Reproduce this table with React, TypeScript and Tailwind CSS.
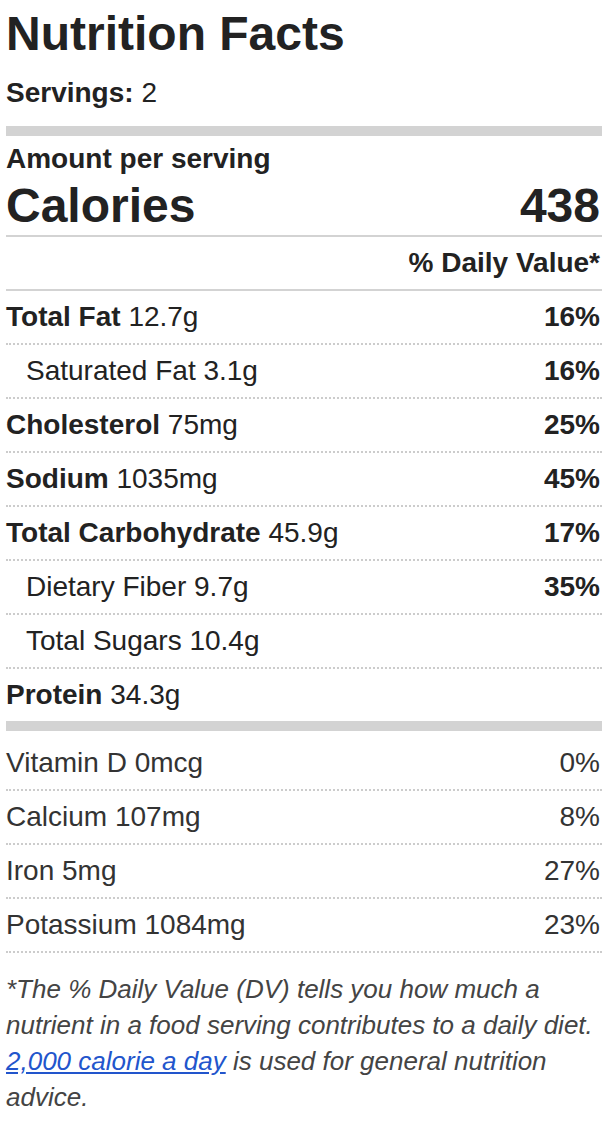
import React from "react";

type Row = {
  label: string;
  amount: string;
  dv?: string;
  indent?: boolean;
  last?: boolean;
};

const mainRows: Row[] = [
  { label: "Total Fat", amount: "12.7g", dv: "16%" },
  { label: "Saturated Fat", amount: "3.1g", dv: "16%", indent: true },
  { label: "Cholesterol", amount: "75mg", dv: "25%" },
  { label: "Sodium", amount: "1035mg", dv: "45%" },
  { label: "Total Carbohydrate", amount: "45.9g", dv: "17%" },
  { label: "Dietary Fiber", amount: "9.7g", dv: "35%", indent: true },
  { label: "Total Sugars", amount: "10.4g", indent: true },
  { label: "Protein", amount: "34.3g", last: true },
];

const vitamins = [
  { label: "Vitamin D 0mcg", dv: "0%" },
  { label: "Calcium 107mg", dv: "8%" },
  { label: "Iron 5mg", dv: "27%" },
  { label: "Potassium 1084mg", dv: "23%" },
];

const NutrientRow = ({ row }: { row: Row }) => {
  return (
    <div
      className={`flex h-[52px] items-center justify-between box-content ${
        row.last ? "" : "border-b-2 border-dotted border-[#cccccc]"
      } ${row.indent ? "pl-[20px]" : ""}`}
    >
      <span>
        {row.indent ? (
          <span>
            {row.label} {row.amount}
          </span>
        ) : (
          <>
            <span className="font-bold">{row.label}</span> {row.amount}
          </>
        )}
      </span>
      {row.dv && <span className="font-bold pr-[2px]">{row.dv}</span>}
    </div>
  );
};

export default function App() {
  return (
    <div
      className="min-h-screen bg-white text-[#222222]"
      style={{ fontFamily: '"Liberation Sans", Arial, sans-serif' }}
    >
      <div className="ml-[6px] w-[596px] text-[28px] leading-[36px]">
        {/* header */}
        <div className="flex h-[68px] items-center text-[48px] font-bold leading-none">
          Nutrition Facts
        </div>
        <div className="flex h-[50px] items-center">
          <span className="font-bold">Servings:</span>&nbsp;2
        </div>
        <div className="mt-[8px] h-[10px] bg-[#d3d3d3]" />

        {/* calories */}
        <div className="flex h-[37px] mt-[4px] items-center font-bold">
          Amount per serving
        </div>
        <div className="flex h-[58px] items-center justify-between text-[48px] font-bold leading-none">
          <span>Calories</span>
          <span className="pr-[2px]">438</span>
        </div>
        <div className="h-[2px] bg-[#d3d3d3]" />
        <div className="flex h-[52px] items-center justify-end font-bold pr-[2px]">
          % Daily Value*
        </div>
        <div className="h-[2px] bg-[#d3d3d3]" />

        {/* nutrients */}
        {mainRows.map((r) => (
          <NutrientRow key={r.label} row={r} />
        ))}
        <div className="h-[10px] bg-[#d3d3d3]" />

        {/* vitamins */}
        <div className="pt-[6px] text-[#333333]">
          {vitamins.map((v) => (
            <div
              key={v.label}
              className="flex h-[52px] items-center justify-between box-content border-b-2 border-dotted border-[#cccccc]"
            >
              <span>{v.label}</span>
              <span className="pr-[2px]">{v.dv}</span>
            </div>
          ))}
        </div>

        {/* footnote */}
        <p className="mt-[18px] text-[26px] leading-[36px] italic text-[#444444]">
          *The % Daily Value (DV) tells you how much a nutrient in a food
          serving contributes to a daily diet.{" "}
          <a href="#" className="text-[#2255cc] underline">
            2,000 calorie a day
          </a>{" "}
          is used for general nutrition advice.
        </p>
      </div>
    </div>
  );
}
